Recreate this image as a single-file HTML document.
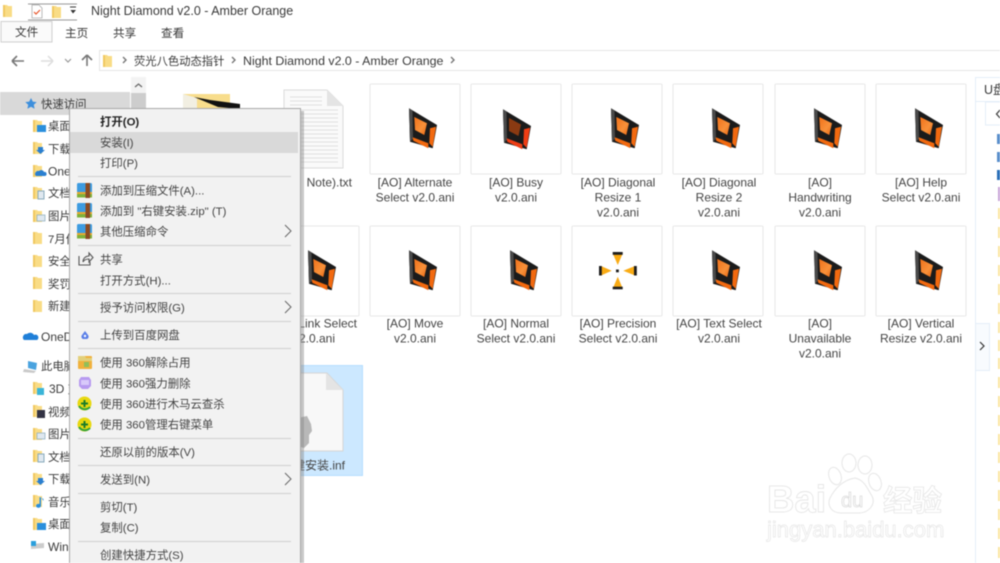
<!DOCTYPE html>
<html><head><meta charset="utf-8"><style>
html,body{margin:0;padding:0;background:#fff;width:1000px;height:563px;overflow:hidden}
svg{display:block;filter:blur(.45px)}
text{font-family:"Liberation Sans","Noto Sans CJK SC",sans-serif;font-size:11.4px;fill:#3a3a3a}
.l{font-size:12px;text-anchor:middle;fill:#444}
.m{font-size:11.4px;fill:#444}
</style></head><body>
<svg width="1000" height="563" viewBox="0 0 1000 563" xmlns="http://www.w3.org/2000/svg">
<defs>
<linearGradient id="og" x1="0" y1="0" x2="1" y2="1"><stop offset="0" stop-color="#f0711a"/><stop offset=".6" stop-color="#f8913a"/><stop offset="1" stop-color="#e8640f"/></linearGradient>
<symbol id="cur" viewBox="0 0 90 90" width="90" height="90">
<path d="M39 24.300L67 41L62.700 64.300L40 57.700Z" fill="#1b1b1b"/>
<path d="M39 24.300L42.500 26.500L43 55L40 57.700Z" fill="#4a4a4a"/>
<path d="M44.300 33L57 39.300L54.300 51L45 46Z" fill="url(#og)"/>
<path d="M42.700 53.300L58.300 59.300L58.300 64.300L43.300 56.700Z" fill="#f2690f"/>
<path d="M60 44.300L66 42.700L62.700 62.700L59.300 59.300Z" fill="#f2690f"/>
</symbol>
<symbol id="box" viewBox="0 0 92 92" width="92" height="92">
<rect x="1" y="1" width="90" height="90" rx="1" fill="#fff" stroke="#e8e8e8"/>
</symbol>
<symbol id="fo" viewBox="0 0 10 14" width="10" height="14">
<path d="M0 1h4l1 1h4v11H0Z" fill="#f9dc86"/><path d="M0 1h2v12H0Z" fill="#f0c860"/>
</symbol>
<symbol id="rar" viewBox="0 0 15 15" width="15" height="15">
<rect y="0" width="15" height="10" rx="1.500" fill="#3d9be0"/><rect y="10" width="15" height="4.500" fill="#7fb13a"/><rect x="0" y="9" width="15" height="2" fill="#e8a930"/><rect x="8.500" y="0" width="4.500" height="15" fill="#8a4a22"/>
</symbol>
<symbol id="g" viewBox="0 0 15 15" width="15" height="15">
<circle cx="7.500" cy="7.500" r="7" fill="#e8d80f"/><path d="M2 10a7 7 0 0 0 11 1" stroke="#2ea13a" stroke-width="2" fill="none"/><path d="M7.500 4v7M4 7.500h7" stroke="#1c7d28" stroke-width="2"/>
</symbol>
<symbol id="chev" viewBox="0 0 8 14" width="8" height="14"><path d="M1 1l6 6-6 6" fill="none" stroke="#666" stroke-width="1"/></symbol>
</defs>

<!-- title bar -->
<use href="#fo" x="3" y="4"/>
<path d="M28 4H77M28 20H77" stroke="#777" stroke-width=".8"/>
<path d="M32 5h7l3 3v10H32Z" fill="#fff" stroke="#aaa" stroke-width=".8"/>
<path d="M34 12l2 2 4-4" fill="none" stroke="#e8552a" stroke-width="1.200"/>
<use href="#fo" x="52" y="5"/>
<path d="M70 7h6" stroke="#333"/><path d="M70.500 10h5.500L73 13.500Z" fill="#333"/>
<text x="91" y="15" style="font-size:12.500px">Night Diamond v2.0 - Amber Orange</text>

<!-- ribbon tabs -->
<rect x="1" y="21.500" width="51" height="20.500" fill="#fafafa" stroke="#cfcfcf"/>
<text x="15" y="36" style="font-size:11.600px">文件</text>
<text x="65" y="37" style="font-size:11.600px">主页</text>
<text x="113" y="37" style="font-size:11.600px">共享</text>
<text x="161" y="37" style="font-size:11.600px">查看</text>

<!-- nav -->
<path d="M12 61h12M12 61l5-5M12 61l5 5" stroke="#777" stroke-width="1.600" fill="none"/>
<path d="M41 61h12M53 61l-5-5M53 61l-5 5" stroke="#ddd" stroke-width="1.500" fill="none"/>
<path d="M65 59l3 3 3-3" stroke="#999" stroke-width="1.200" fill="none"/>
<path d="M87 66V55M87 55l-5 5M87 55l5 5" stroke="#777" stroke-width="1.600" fill="none"/>
<rect x="99.500" y="50.500" width="902" height="20" fill="#fff" stroke="#e6e6e6"/>
<use href="#fo" x="103" y="54"/>
<path d="M123 57l3 3-3 3M232 57l3 3-3 3M451 57l3 3-3 3" stroke="#777" stroke-width="1.400" fill="none"/>
<text x="134" y="65" style="font-size:11.300px">荧光八色动态指针</text>
<text x="243" y="65" style="font-size:12.400px">Night Diamond v2.0 - Amber Orange</text>

<!-- sidebar -->
<rect x="131" y="77" width="15" height="486" fill="#f3f3f3"/>
<rect x="131" y="93" width="15" height="30" fill="#cdcdcd"/>
<path d="M135 87l3.500-3 3.500 3" stroke="#666" stroke-width="1.200" fill="none"/>
<rect x="0" y="92" width="130" height="23" fill="#d9d9d9"/>
<path d="M31 98l1.800 3.600 3.900.5-2.900 2.700.8 3.900-3.600-2-3.600 2 .8-3.900-2.900-2.700 3.900-.5Z" fill="#3d8fdc"/>
<text x="41" y="108">快速访问</text>
<g>
<use href="#fo" x="33" y="119"/><rect x="37" y="125" width="9" height="7" fill="#2a8fdc"/><text x="48" y="130">桌面</text>
<use href="#fo" x="33" y="141"/><path d="M38 147h5v3h2l-4.500 4-4.500-4h2Z" fill="#2a7fd0"/><text x="48" y="153">下载</text>
<use href="#fo" x="33" y="164"/><path d="M36 176a3 3 0 0 1 3-5 3 3 0 0 1 5 1 2 2 0 0 1 1 4Z" fill="#2a7fd0"/><text x="48" y="175.500" style="font-size:12px">One</text>
<use href="#fo" x="33" y="186"/><rect x="38" y="191" width="6" height="8" fill="#dfe8f0" stroke="#8ab"/><text x="48" y="197">文档</text>
<use href="#fo" x="33" y="209"/><rect x="37" y="215" width="8" height="6" fill="#dfe8f0" stroke="#8ab" stroke-width=".7"/><text x="48" y="220">图片</text>
<use href="#fo" x="33" y="231"/><text x="48" y="243">7月份</text>
<use href="#fo" x="33" y="254"/><text x="48" y="265">安全</text>
<use href="#fo" x="33" y="276"/><text x="48" y="288">奖罚</text>
<use href="#fo" x="33" y="299"/><text x="48" y="310">新建</text>
<path d="M24 340a3.500 3.500 0 0 1 3-6 4.500 4.500 0 0 1 7 1 2.700 2.700 0 0 1 3 5Z" fill="#1f7fd8"/><text x="41" y="341" style="font-size:12px">OneDrive</text>
<path d="M28 361l9 2-1 7-8-2Z" fill="#4aa3df"/><path d="M24 369l12 2-2 2-11-1Z" fill="#c9c9c9"/><text x="41" y="370">此电脑</text>
<use href="#fo" x="33" y="381"/><rect x="37" y="388" width="7" height="7" fill="#3ab5d8"/><text x="49" y="393" style="font-size:12px">3D 对象</text>
<use href="#fo" x="33" y="404"/><rect x="37" y="410" width="8" height="8" fill="#334"/><text x="48" y="416">视频</text>
<use href="#fo" x="33" y="427"/><rect x="37" y="433" width="8" height="6" fill="#dfe8f0" stroke="#8ab" stroke-width=".7"/><text x="48" y="438">图片</text>
<use href="#fo" x="33" y="449"/><rect x="38" y="454" width="6" height="8" fill="#dfe8f0" stroke="#8ab"/><text x="48" y="461">文档</text>
<use href="#fo" x="33" y="472"/><path d="M38 478h5v3h2l-4.500 4-4.500-4h2Z" fill="#2a7fd0"/><text x="48" y="483">下载</text>
<use href="#fo" x="33" y="494"/><path d="M41 497v9a2.500 2 0 1 1-1.500-2v-7l4 2v2Z" fill="#2a8fdc"/><text x="48" y="506">音乐</text>
<use href="#fo" x="33" y="517"/><rect x="37" y="523" width="9" height="7" fill="#2a8fdc"/><text x="48" y="528">桌面</text>
<path d="M31 544l13-1v5l-13 1Z" fill="#ccc"/><rect x="31" y="541" width="5" height="5" fill="#2a9fdc"/><text x="48" y="551" style="font-size:12px">Windows</text>
</g>

<!-- folder + txt -->
<path d="M183 94h47v30h-47Z" fill="#f8dd8c"/>
<path d="M183 94l14 4v20l-14-4Z" fill="#f2efe2"/>
<path d="M194 97l16 3 30 4v5l-22-2Z" fill="#111"/>
<path d="M284 90h43l16 16v62h-59Z" fill="#fafafa" stroke="#dcdcdc"/>
<path d="M327 90l16 16h-16Z" fill="#e4e4e4"/>
<g stroke="#e0e0e0" stroke-width="1"><path d="M290 97h32M290 101h32M290 105h32M290 110h48M290 114h48M290 118h48M290 122h48M290 126h48M290 130h48M290 134h48M290 138h48M290 142h48M290 146h48M290 150h48M290 154h48M290 158h48M290 162h48"/></g>
<text x="352" y="186.500" style="font-size:12px;text-anchor:end;fill:#444">Note).txt</text>

<!-- row 1 thumbs -->
<use href="#box" x="369" y="83"/><use href="#cur" x="370" y="84"/>
<use href="#box" x="470" y="83"/>
<g transform="translate(464,85)"><path d="M39 24.300L67 41L62.700 64.300L40 57.700Z" fill="#1b1b1b"/><path d="M39 24.300L42.500 26.500L43 55L40 57.700Z" fill="#4a4a4a"/><path d="M45 33L57 39.500L54.500 51L45 46Z" fill="#8a3a12"/><path d="M42.700 53.300L58.300 59.300L58.300 64.300L43.300 56.700Z" fill="#ef3d14"/><path d="M60 44.300L66 42.700L62.700 62.700L59.300 59.300Z" fill="#ef3d14"/></g>
<use href="#box" x="571" y="83"/><use href="#cur" x="572" y="84"/>
<use href="#box" x="672" y="83"/><use href="#cur" x="673" y="84"/>
<use href="#box" x="774" y="83"/><use href="#cur" x="775" y="84"/>
<use href="#box" x="875" y="83"/><use href="#cur" x="876" y="84"/>

<text class="l" x="415" y="186.500">[AO] Alternate</text><text class="l" x="415" y="201.500">Select v2.0.ani</text>
<text class="l" x="516" y="186.500">[AO] Busy</text><text class="l" x="516" y="201.500">v2.0.ani</text>
<text class="l" x="618" y="186.500">[AO] Diagonal</text><text class="l" x="618" y="201.500">Resize 1</text><text class="l" x="618" y="216.500">v2.0.ani</text>
<text class="l" x="719" y="186.500">[AO] Diagonal</text><text class="l" x="719" y="201.500">Resize 2</text><text class="l" x="719" y="216.500">v2.0.ani</text>
<text class="l" x="820" y="186.500">[AO]</text><text class="l" x="820" y="201.500">Handwriting</text><text class="l" x="820" y="216.500">v2.0.ani</text>
<text class="l" x="921" y="186.500">[AO] Help</text><text class="l" x="921" y="201.500">Select v2.0.ani</text>

<!-- row 2 thumbs -->
<use href="#box" x="268" y="225"/><use href="#cur" x="269" y="226"/>
<use href="#box" x="369" y="225"/><use href="#cur" x="370" y="226"/>
<use href="#box" x="470" y="225"/><use href="#cur" x="471" y="226"/>
<use href="#box" x="571" y="225"/>
<g fill="#f9ab14"><path d="M613 254h9.500l-4.750 11Z"/><path d="M613 288h9.500l-4.750-11.300Z"/><path d="M601 266v9.500l10.700-4.750Z"/><path d="M635 266v9.500l-11.700-4.750Z"/></g>
<g fill="#1d1d1d"><rect x="612.700" y="252" width="10" height="2.800"/><rect x="612.700" y="286.700" width="10" height="2.600"/><rect x="599" y="266" width="2.800" height="9.500"/><rect x="634" y="266" width="2.800" height="9.500"/><rect x="616" y="269.500" width="2.800" height="2.800"/></g>
<use href="#box" x="672" y="225"/><use href="#cur" x="673" y="226"/>
<use href="#box" x="774" y="225"/><use href="#cur" x="775" y="226"/>
<use href="#box" x="875" y="225"/><use href="#cur" x="876" y="226"/>

<text class="l" x="314" y="327.500">[AO] Link Select</text><text class="l" x="314" y="342.500">v2.0.ani</text>
<text class="l" x="415" y="327.500">[AO] Move</text><text class="l" x="415" y="342.500">v2.0.ani</text>
<text class="l" x="516" y="327.500">[AO] Normal</text><text class="l" x="516" y="342.500">Select v2.0.ani</text>
<text class="l" x="618" y="327.500">[AO] Precision</text><text class="l" x="618" y="342.500">Select v2.0.ani</text>
<text class="l" x="719" y="327.500">[AO] Text Select</text><text class="l" x="719" y="342.500">v2.0.ani</text>
<text class="l" x="820" y="327.500">[AO]</text><text class="l" x="820" y="342.500">Unavailable</text><text class="l" x="820" y="357.500">v2.0.ani</text>
<text class="l" x="921" y="327.500">[AO] Vertical</text><text class="l" x="921" y="342.500">Resize v2.0.ani</text>

<!-- selected inf -->
<rect x="268.500" y="365.500" width="94" height="110" fill="#cce8ff" stroke="#b5deff"/>
<path d="M284 373h43l16 17v61h-59Z" fill="#f8f8f8" stroke="#d5d5d5"/>
<path d="M326 373l17 17h-17Z" fill="#e4e4e4"/>
<path d="M298 418l9-2 4 8 1 7-3 4 0 8-5 5-6-2Z" fill="#b8b8b8"/>
<text class="l" x="313" y="469.500">右键安装.inf</text>

<!-- right pane -->
<rect x="975" y="77.500" width="26" height="486" fill="#fff"/>
<path d="M975.500 77v486M975 77.500h25M975 101.500h25" stroke="#e4eef8"/>
<rect x="985.500" y="102" width="16" height="23" fill="#fff" stroke="#e4eef8"/>
<text x="984" y="94" style="font-size:12.500px">U盘</text>
<path d="M1000 110l-3.500 4 3.500 4" stroke="#444" stroke-width="1.300" fill="none"/>
<rect x="975.500" y="323.500" width="14" height="47" fill="#f8fbfe" stroke="#e4eef8"/>
<path d="M980 342l4 4-4 4" stroke="#333" stroke-width="1.200" fill="none"/>
<rect x="997" y="134" width="3" height="10" fill="#5a8fcc"/><rect x="997" y="152" width="3" height="10" fill="#5a8fcc"/><rect x="997" y="170" width="3" height="10" fill="#2a6fb8"/><rect x="998" y="187" width="2" height="14" fill="#c9a6d8"/>
<g fill="#fbe6a0"><rect x="998" y="208" width="2" height="11"/><rect x="998" y="227" width="2" height="11"/><rect x="998" y="246" width="2" height="11"/><rect x="998" y="265" width="2" height="11"/><rect x="998" y="284" width="2" height="11"/><rect x="998" y="303" width="2" height="11"/><rect x="998" y="322" width="2" height="11"/><rect x="998" y="340" width="2" height="11"/><rect x="998" y="358" width="2" height="11"/><rect x="998" y="377" width="2" height="11"/><rect x="998" y="396" width="2" height="11"/><rect x="998" y="415" width="2" height="11"/><rect x="998" y="434" width="2" height="11"/><rect x="998" y="452" width="2" height="11"/><rect x="998" y="471" width="2" height="11"/><rect x="998" y="490" width="2" height="11"/><rect x="998" y="509" width="2" height="11"/><rect x="998" y="528" width="2" height="11"/><rect x="998" y="547" width="2" height="11"/></g>

<!-- context menu -->
<rect x="72" y="111" width="232" height="460" fill="#888" opacity=".45"/>
<rect x="69.500" y="108.500" width="231" height="460" fill="#f2f2f2" stroke="#a8a8a8"/>
<rect x="70" y="132" width="228" height="21" fill="#d9d9d9"/>
<g stroke="#cfcfcf"><path d="M78 176.500H291M78 245.500H291M78 293.500H291M78 321.500H291M78 348.500H291M78 438.500H291M78 465.500H291M78 493.500H291M78 541.500H291"/></g>
<text class="m" x="100" y="125.500" style="font-weight:bold;fill:#222">打开(O)</text>
<text class="m" x="100" y="146.500">安装(I)</text>
<text class="m" x="100" y="167">打印(P)</text>
<text class="m" x="100" y="194.500">添加到压缩文件(A)...</text>
<text class="m" x="100" y="215">添加到 "右键安装.zip" (T)</text>
<text class="m" x="100" y="235.500">其他压缩命令</text>
<text class="m" x="100" y="263.500">共享</text>
<text class="m" x="100" y="284.500">打开方式(H)...</text>
<text class="m" x="100" y="311.500">授予访问权限(G)</text>
<text class="m" x="100" y="339">上传到百度网盘</text>
<text class="m" x="100" y="366.500">使用 360解除占用</text>
<text class="m" x="100" y="387.500">使用 360强力删除</text>
<text class="m" x="100" y="408">使用 360进行木马云查杀</text>
<text class="m" x="100" y="428.500">使用 360管理右键菜单</text>
<text class="m" x="100" y="456">还原以前的版本(V)</text>
<text class="m" x="100" y="483.500">发送到(N)</text>
<text class="m" x="100" y="511">剪切(T)</text>
<text class="m" x="100" y="531.500">复制(C)</text>
<text class="m" x="100" y="559">创建快捷方式(S)</text>
<use href="#rar" x="77" y="183"/><use href="#rar" x="77" y="203"/><use href="#rar" x="77" y="224"/>
<path d="M79 256v9h11v-3M83 262c0-4 3-6 6-6v-3l4 4.500-4 4.500v-3c-3 0-5 1-6 3" fill="none" stroke="#555" stroke-width="1.100"/>
<path d="M85 331l3 4a2.500 2.500 0 0 1-1 4h-4a2.500 2.500 0 0 1-1-4Z" fill="#5a7fe8"/><circle cx="85" cy="336" r="1.200" fill="#fff"/>
<rect x="78" y="356" width="14" height="13" rx="1" fill="#f0b13c"/><path d="M78 356h7l1 2h6v3H78Z" fill="#e3d07a"/><rect x="84" y="362" width="5" height="5" fill="#8fbf5a"/>
<path d="M81 377h8l2 3v6l-3 3h-6l-3-3v-6Z" fill="#b79af0"/><rect x="81" y="380" width="8" height="5" fill="#d8c9fa"/>
<use href="#g" x="77" y="396"/><use href="#g" x="77" y="417"/>
<use href="#chev" x="284" y="224"/><use href="#chev" x="284" y="300"/><use href="#chev" x="284" y="472"/>

<!-- watermark -->
<g>
<text x="767" y="512" style="font-size:38px;font-weight:bold;fill:#fff;stroke:#e6e6e6;stroke-width:.9">Bai</text>
<ellipse cx="849" cy="463" rx="7" ry="9" fill="#fff" stroke="#e6e6e6"/><ellipse cx="865" cy="465" rx="7" ry="9" fill="#fff" stroke="#e6e6e6"/>
<ellipse cx="835" cy="476" rx="6" ry="9" fill="#fff" stroke="#e6e6e6" transform="rotate(-20 835 476)"/><ellipse cx="875" cy="482" rx="6" ry="9" fill="#fff" stroke="#e6e6e6" transform="rotate(-20 875 482)"/>
<path d="M855 478c10 2 13 12 17 18 4 8-3 17-13 17h-18c-10 0-14-8-11-15 4-8 12-18 25-20Z" fill="#fff" stroke="#e6e6e6"/>
<text x="841" y="507" style="font-size:20px;fill:#fff;stroke:#dcdcdc;stroke-width:.8">du</text>
<text x="883" y="511" style="font-size:29.500px;fill:#fff;stroke:#e6e6e6;stroke-width:.8;font-weight:bold">经验</text>
<text x="767" y="537" style="font-size:22px;fill:#fff;stroke:#e6e6e6;stroke-width:.7">jingyan.baidu.com</text>
</g>
</svg>
</body></html>
